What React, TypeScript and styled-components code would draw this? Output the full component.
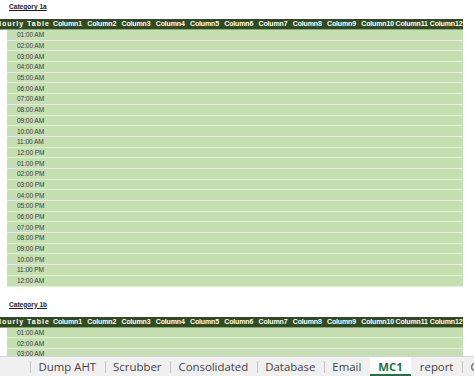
import React from "react";
import styled, { createGlobalStyle } from "styled-components";

const GlobalStyle = createGlobalStyle`
    html, body {
        margin: 0;
        padding: 0;
        background: #ffffff;
        overflow: hidden;
    }
`;

const hours = (() => {
    const list: string[] = [];
    for (let i = 1; i <= 24; i++) {
        const h = i % 12 === 0 ? 12 : i % 12;
        const suffix = i < 12 || i === 24 ? "AM" : "PM";
        list.push(`${String(h).padStart(2, "0")}:00 ${suffix}`);
    }
    return list;
})();

const columns = Array.from({length: 12}, (_, i) => `Column${i + 1}`);

const sheets = ["Dump AHT", "Scrubber", "Consolidated", "Database", "Email", "MC1", "report", "C"];
const activeSheet = "MC1";

const HourTable = ({title}: { title: string }) => (
    <StyledSection>
        <StyledCategory>{title}</StyledCategory>
        <StyledHeader>
            <StyledFirstHead>Hourly Table</StyledFirstHead>
            {columns.map(c => <StyledHeadCell key={c}>{c}</StyledHeadCell>)}
        </StyledHeader>
        {hours.map(h => (
            <StyledRow key={h}>
                <StyledTime>{h}</StyledTime>
            </StyledRow>
        ))}
    </StyledSection>
);

export default function App() {
    const activeIndex = sheets.indexOf(activeSheet);
    return (
        <StyledPage>
            <GlobalStyle/>
            <StyledSheet>
                <HourTable title="Category 1a"/>
                <HourTable title="Category 1b"/>
            </StyledSheet>
            <StyledTabBar>
                {sheets.map((s, i) => (
                    <StyledTab key={s} $active={s === activeSheet}
                               $divider={i !== activeIndex && i !== activeIndex + 1}>
                        {s}
                    </StyledTab>
                ))}
            </StyledTabBar>
        </StyledPage>
    );
}

const StyledPage = styled.div`
    width: 474px;
    height: 376px;
    display: flex;
    flex-direction: column;
    overflow: hidden;
    background: #ffffff;
`;

const StyledSheet = styled.div`
    height: 356px;
    overflow: hidden;
    flex-shrink: 0;
`;

const StyledSection = styled.section`
    padding-top: 3px;
    margin-bottom: 11px;
`;

const StyledCategory = styled.div`
    margin-left: 9px;
    height: 16px;
    font-family: "Liberation Sans", Arial, sans-serif;
    font-size: 6.6px;
    font-weight: bold;
    text-decoration: underline;
    color: #1c1c1c;
    line-height: 7px;
`;

const StyledHeader = styled.div`
    display: grid;
    grid-template-columns: 52px repeat(12, 34.25px);
    width: 463px;
    height: 11px;
    background: #2f4b1f;
    border-bottom: 1px solid #8aa675;
    box-sizing: border-box;
    font-family: "Liberation Sans", Arial, sans-serif;
    font-weight: bold;
    font-size: 7px;
    letter-spacing: -0.15px;
    line-height: 10px;
    color: #ffffff;
`;

const StyledHeadCell = styled.div`
    padding-left: 1px;
    white-space: nowrap;
    overflow: hidden;
`;

const StyledFirstHead = styled(StyledHeadCell)`
    padding-left: 0;
    text-indent: -4px;
    letter-spacing: 1px;
`;

const StyledRow = styled.div`
    margin-left: 7px;
    width: 456px;
    height: 10.7px;
    box-sizing: border-box;
    background: #c5dfb2;
    border-bottom: 1px solid #e3efd9;
    display: flex;
    align-items: center;
`;

const StyledTime = styled.span`
    margin-left: 10px;
    font-family: "Liberation Sans", Arial, sans-serif;
    font-size: 6.6px;
    color: #3a3a3a;
    letter-spacing: -0.1px;
`;

const StyledTabBar = styled.div`
    flex: 1;
    display: flex;
    align-items: stretch;
    padding-left: 30px;
    background: #f0f0f0;
    border-top: 1px solid #d6d6d6;
    font-family: "Open Sans", "Noto Sans", sans-serif;
    font-size: 11.4px;
    color: #444444;
    white-space: nowrap;
`;

const StyledTab = styled.div<{ $active: boolean; $divider: boolean }>`
    position: relative;
    display: flex;
    align-items: center;
    padding: 0 8.5px 1px;
    background: ${p => p.$active ? "#ffffff" : "transparent"};
    color: ${p => p.$active ? "#217346" : "#444444"};
    font-weight: ${p => p.$active ? 700 : 400};
    box-shadow: ${p => p.$active ? "inset 0 -2px 0 #217346" : "none"};

    &::before {
        content: "";
        display: ${p => p.$divider ? "block" : "none"};
        position: absolute;
        left: 0;
        top: 4px;
        bottom: 3px;
        width: 1px;
        background: #c4c4c4;
    }
`;
